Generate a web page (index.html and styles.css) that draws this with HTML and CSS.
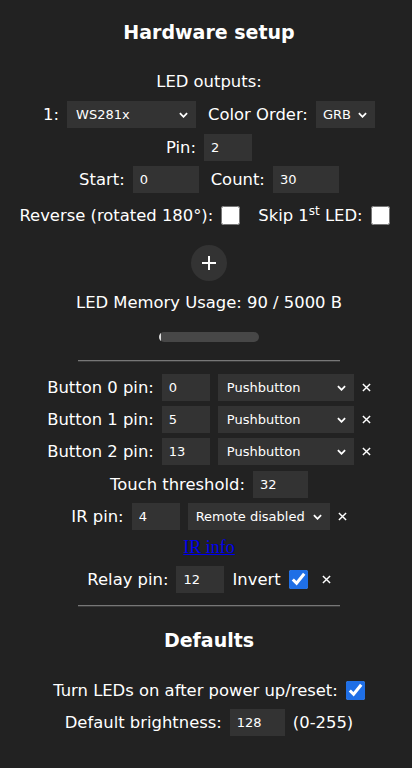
FILE: index.html
```html
<!DOCTYPE html>
<html lang="en">
<head>
  <meta charset="UTF-8" />
  <meta name="viewport" content="width=device-width, initial-scale=1.0" />
  <title>Hardware setup</title>
  <link rel="stylesheet" href="styles.css">
</head>
<body>
  <h2 class="title">Hardware setup</h2>
  <div class="line head">LED outputs:</div>

  <div class="row r33">
    <span>1:</span>
    <span class="sel w129">
      <select><option>WS281x</option></select>
      <svg class="chev" viewBox="0 0 10 6"><path d="M1 1l4 4 4-4" /></svg>
    </span>
    <span class="sp">Color Order:</span>
    <span class="sel w59">
      <select><option>GRB</option></select>
      <svg class="chev" viewBox="0 0 10 6"><path d="M1 1l4 4 4-4" /></svg>
    </span>
  </div>

  <div class="row r32">
    <span>Pin:</span>
    <input type="number" class="w48" value="2">
  </div>

  <div class="row r33">
    <span>Start:</span>
    <input type="number" class="w66" value="0">
    <span class="sp">Count:</span>
    <input type="number" class="w66" value="30">
  </div>

  <div class="row r38 shift">
    <span>Reverse (rotated 180°):</span>
    <input type="checkbox">
    <span class="sp2">Skip 1<sup>st</sup> LED:</span>
    <input type="checkbox">
  </div>

  <button class="add" type="button">
    <svg viewBox="0 0 14 14"><path d="M7 0v14M0 7h14" /></svg>
  </button>

  <div class="line mem">LED Memory Usage: 90 / 5000 B</div>
  <div class="bar"><div class="fill" style="width:2%"></div></div>

  <hr class="sep first">

  <div class="row r32">
    <span>Button 0 pin:</span>
    <input type="number" class="w48" value="0">
    <span class="sel w136">
      <select><option>Pushbutton</option></select>
      <svg class="chev" viewBox="0 0 10 6"><path d="M1 1l4 4 4-4" /></svg>
    </span>
    <svg class="x" viewBox="0 0 10 10"><path d="M1 1l8 8M9 1l-8 8" /></svg>
  </div>
  <div class="row r32">
    <span>Button 1 pin:</span>
    <input type="number" class="w48" value="5">
    <span class="sel w136">
      <select><option>Pushbutton</option></select>
      <svg class="chev" viewBox="0 0 10 6"><path d="M1 1l4 4 4-4" /></svg>
    </span>
    <svg class="x" viewBox="0 0 10 10"><path d="M1 1l8 8M9 1l-8 8" /></svg>
  </div>
  <div class="row r33">
    <span>Button 2 pin:</span>
    <input type="number" class="w48" value="13">
    <span class="sel w136">
      <select><option>Pushbutton</option></select>
      <svg class="chev" viewBox="0 0 10 6"><path d="M1 1l4 4 4-4" /></svg>
    </span>
    <svg class="x" viewBox="0 0 10 10"><path d="M1 1l8 8M9 1l-8 8" /></svg>
  </div>

  <div class="row r32">
    <span>Touch threshold:</span>
    <input type="number" class="w55" value="32">
  </div>

  <div class="row r32">
    <span>IR pin:</span>
    <input type="number" class="w48" value="4">
    <span class="sel w142">
      <select class="tight"><option>Remote disabled</option></select>
      <svg class="chev" viewBox="0 0 10 6"><path d="M1 1l4 4 4-4" /></svg>
    </span>
    <svg class="x" viewBox="0 0 10 10"><path d="M1 1l8 8M9 1l-8 8" /></svg>
  </div>

  <div class="line info"><a href="#">IR info</a></div>

  <div class="row r32">
    <span>Relay pin:</span>
    <input type="number" class="w48" value="12">
    <span>Invert</span>
    <input type="checkbox" checked>
    <svg class="x wide" viewBox="0 0 10 10"><path d="M1 1l8 8M9 1l-8 8" /></svg>
  </div>

  <hr class="sep last">

  <h2 class="title sub">Defaults</h2>

  <div class="row r32 gapped">
    <span>Turn LEDs on after power up/reset:</span>
    <input type="checkbox" checked>
  </div>
  <div class="row r33">
    <span>Default brightness:</span>
    <input type="number" class="w55" value="128">
    <span>(0-255)</span>
  </div>
</body>
</html>
```

FILE: styles.css
```css
body {
  font-family: "DejaVu Sans", Verdana, sans-serif;
  font-size: 16.4px;
  background: #222;
  color: #fff;
  margin: 0;
  padding: 0 0 0 6px;
  text-align: center;
}
.title {
  margin: 0;
  padding-top: 12px;
  height: 40px;
  line-height: 40px;
  font-size: 19px;
}
.title.sub {
  padding-top: 0;
  margin-top: 13px;
}
.line {
  height: 32px;
  line-height: 32px;
}
.head {
  margin-top: 14px;
}
.row {
  display: flex;
  justify-content: center;
  align-items: center;
  gap: 8px;
}
.r32 { height: 32px; }
.r33 { height: 33px; }
.r38 { height: 38px; }
.shift { padding-right: 9px; }
.sp { margin-left: 4px; }
.sp2 { margin-left: 10px; }
sup {
  font-size: 12px;
  line-height: 0;
}
input[type="number"], select {
  background: #333;
  color: #fff;
  font-family: "DejaVu Sans", Verdana, sans-serif;
  font-size: 13px;
  border: 0;
  height: 27px;
  padding: 0 0 0 7px;
  margin: 0;
  box-sizing: border-box;
  outline: none;
}
input[type="number"] {
  -moz-appearance: textfield;
}
input::-webkit-inner-spin-button,
input::-webkit-outer-spin-button {
  -webkit-appearance: none;
  margin: 0;
}
.w48 { width: 48px; }
.w55 { width: 55px; }
.w66 { width: 66px; }
.sel {
  position: relative;
  display: inline-block;
}
.sel select {
  -webkit-appearance: none;
  appearance: none;
  width: 100%;
  padding-left: 9px;
}
.sel select.tight { padding-left: 8px; }
.sel.w59 select { padding-left: 7px; }
.w129 { width: 129px; }
.w59 { width: 59px; }
.w136 { width: 136px; }
.w142 { width: 142px; }
.chev {
  position: absolute;
  right: 8px;
  top: 11px;
  width: 9px;
  height: 6px;
  fill: none;
  stroke: #fff;
  stroke-width: 2;
  pointer-events: none;
}
.x {
  width: 9px;
  height: 9px;
  fill: none;
  stroke: #fff;
  stroke-width: 1.6;
}
.x.wide { margin-left: 6px; }
input[type="checkbox"] {
  width: 19px;
  height: 19px;
  margin: 0;
  accent-color: #1f6fe6;
}
.add {
  display: block;
  margin: 11px auto 0;
  width: 36px;
  height: 36px;
  border: 0;
  border-radius: 50%;
  background: #333;
  padding: 0;
  cursor: pointer;
}
.add svg {
  display: block;
  margin: 0 auto;
  width: 14px;
  height: 14px;
  stroke: #fff;
  stroke-width: 2;
}
.mem {
  margin-top: 6px;
}
.bar {
  width: 100px;
  height: 10px;
  margin: 13px auto 0;
  background: #474747;
  border-radius: 5px;
  overflow: hidden;
}
.fill {
  height: 100%;
  background: #ddd;
}
.sep {
  width: 262px;
  margin: 18px auto 9px;
  border: 0;
  border-top: 1px solid #777;
  border-bottom: 1px solid #3a3a3a;
}
.sep.last {
  margin: 10px auto 0;
}
.info {
  height: 31px;
  line-height: 31px;
}
.info a {
  color: #0000ee;
  font-family: "Liberation Serif", "Times New Roman", serif;
  font-size: 18px;
}
.gapped {
  margin-top: 14px;
}
```
